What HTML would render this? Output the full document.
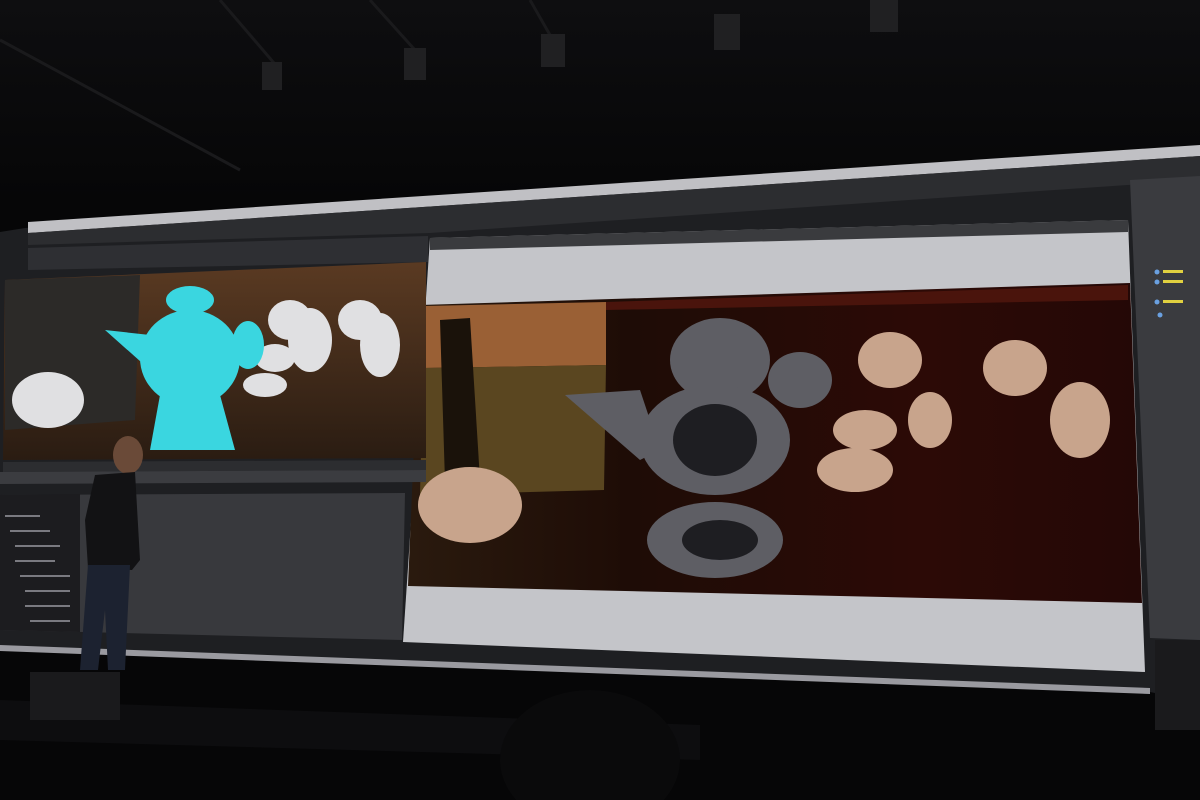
<!DOCTYPE html>
<html><head><meta charset="utf-8"><style>
html,body{margin:0;padding:0;background:#050506;width:1200px;height:800px;overflow:hidden;font-family:"Liberation Sans",sans-serif}
svg{display:block}
</style></head><body>
<svg width="1200" height="800" viewBox="0 0 1200 800" xmlns="http://www.w3.org/2000/svg">
<defs>
<linearGradient id="rend" x1="0" y1="0" x2="1" y2="0"><stop offset="0" stop-color="#2a1a0e"/><stop offset="0.3" stop-color="#1e0c06"/><stop offset="0.7" stop-color="#2c0a06"/><stop offset="1" stop-color="#240806"/></linearGradient>
<linearGradient id="vp" x1="0" y1="0" x2="0" y2="1"><stop offset="0" stop-color="#5a3a22"/><stop offset="1" stop-color="#2a1c12"/></linearGradient>
<linearGradient id="ceil" x1="0" y1="0" x2="0" y2="1"><stop offset="0" stop-color="#0e0e10"/><stop offset="1" stop-color="#060607"/></linearGradient>
</defs>
<rect width="1200" height="800" fill="#060607"/>
<rect x="0" y="0" width="1200" height="200" fill="url(#ceil)"/>
<g stroke="#1a1a1c" stroke-width="3"><line x1="0" y1="40" x2="240" y2="170"/><line x1="220" y1="0" x2="280" y2="70"/><line x1="370" y1="0" x2="415" y2="50"/><line x1="530" y1="0" x2="550" y2="35"/></g>
<g fill="#202022"><rect x="262" y="62" width="20" height="28"/><rect x="404" y="48" width="22" height="32"/><rect x="541" y="34" width="24" height="33"/><rect x="714" y="14" width="26" height="36"/><rect x="870" y="0" width="28" height="32"/></g>
<!-- screen -->
<polygon points="25,228 1200,146 1200,702 1150,692 0,648 0,232" fill="#1e1f22"/>
<polygon points="28,222 1200,145 1200,156 28,233" fill="#c0c0c4"/>
<text x="700" y="195" font-size="6" fill="#cfcfd2" transform="rotate(-3.8 700 195)">** Katana 1.0v1b7 - GTC_DualKatana **</text>
<polygon points="28,233 1200,156 1200,180 430,233 28,245" fill="#2c2d30"/>
<!-- right sidebar -->
<polygon points="1130,180 1200,176 1200,640 1150,638" fill="#3a3b3f"/>
<g fill="#e0d040"><rect x="1163" y="270" width="20" height="3"/><rect x="1163" y="280" width="20" height="3"/><rect x="1163" y="300" width="20" height="3"/></g>
<g fill="#6aa0e0"><circle cx="1157" cy="272" r="2.5"/><circle cx="1157" cy="282" r="2.5"/><circle cx="1157" cy="302" r="2.5"/><circle cx="1160" cy="315" r="2.5"/></g>
<!-- gray render panel -->
<polygon points="430,238 1128,220 1145,672 403,642" fill="#c4c5c9"/>
<polygon points="430,238 1128,220 1128,232 430,250" fill="#3a3b3e"/>
<!-- render image -->
<polygon points="420,305 1130,283 1142,603 408,586" fill="url(#rend)"/>
<polygon points="425,306 606,302 606,365 423,368" fill="#9a6035"/>
<polygon points="423,368 606,365 604,490 420,495" fill="#5a4620"/>
<polygon points="440,320 470,318 480,480 445,482" fill="#1a120a"/>
<polygon points="606,302 1128,285 1128,300 606,310" fill="#4a140c"/>
<g fill="#c8a48c">
<ellipse cx="890" cy="360" rx="32" ry="28"/><ellipse cx="1015" cy="368" rx="32" ry="28"/><ellipse cx="470" cy="505" rx="52" ry="38"/><ellipse cx="865" cy="430" rx="32" ry="20"/><ellipse cx="855" cy="470" rx="38" ry="22"/><ellipse cx="1080" cy="420" rx="30" ry="38"/><ellipse cx="930" cy="420" rx="22" ry="28"/>
</g>
<g fill="#5e5e64"><ellipse cx="720" cy="360" rx="50" ry="42"/><ellipse cx="715" cy="440" rx="75" ry="55"/><ellipse cx="715" cy="540" rx="68" ry="38"/><ellipse cx="800" cy="380" rx="32" ry="28"/><polygon points="565,395 640,390 660,450 640,460"/></g>
<g fill="#1e1e22"><ellipse cx="715" cy="440" rx="42" ry="36"/><ellipse cx="720" cy="540" rx="38" ry="20"/></g>
<!-- left viewport -->
<polygon points="28,248 428,236 428,262 28,270" fill="#2e2f33"/>
<polygon points="5,280 426,262 426,458 3,460" fill="url(#vp)"/>
<polygon points="5,280 140,275 135,420 5,430" fill="#2c2a28"/>
<g fill="#e0e0e2"><ellipse cx="48" cy="400" rx="36" ry="28"/><ellipse cx="290" cy="320" rx="22" ry="20"/><ellipse cx="360" cy="320" rx="22" ry="20"/><ellipse cx="275" cy="358" rx="20" ry="14"/><ellipse cx="265" cy="385" rx="22" ry="12"/><ellipse cx="380" cy="345" rx="20" ry="32"/><ellipse cx="310" cy="340" rx="22" ry="32"/></g>
<g fill="#3ad6e0"><ellipse cx="190" cy="358" rx="50" ry="48"/><ellipse cx="190" cy="300" rx="24" ry="14"/><polygon points="160,395 220,395 235,450 150,450"/><polygon points="105,330 150,335 150,370"/><ellipse cx="248" cy="345" rx="16" ry="24"/></g>
<polygon points="3,462 426,460 426,470 3,472" fill="#2c2d30"/>
<!-- lower left panel -->
<polygon points="0,472 426,470 426,482 0,484" fill="#3b3c40"/>
<polygon points="0,495 405,493 402,640 0,630" fill="#38393d"/>
<polygon points="0,495 80,494 80,632 0,630" fill="#1c1c1f"/>
<g fill="#7a7a80"><rect x="5" y="515" width="35" height="2"/><rect x="10" y="530" width="40" height="2"/><rect x="15" y="545" width="45" height="2"/><rect x="15" y="560" width="40" height="2"/><rect x="20" y="575" width="50" height="2"/><rect x="25" y="590" width="45" height="2"/><rect x="25" y="605" width="45" height="2"/><rect x="30" y="620" width="40" height="2"/></g>
<!-- screen bottom edge -->
<polygon points="0,645 1150,688 1150,694 0,651" fill="#9a9aa0"/>
<!-- stage -->
<polygon points="0,700 700,725 700,760 0,740" fill="#0d0d0f"/>
<rect x="30" y="672" width="90" height="48" fill="#1a1a1c"/>
<ellipse cx="590" cy="760" rx="90" ry="70" fill="#0a0a0b"/>
<rect x="1155" y="640" width="45" height="90" fill="#1a1a1c"/>
<!-- presenter -->
<ellipse cx="128" cy="455" rx="15" ry="19" fill="#6a4a38"/>
<path d="M95 475 L135 472 L140 560 L132 570 L88 568 L85 520 Z" fill="#121214"/>
<path d="M88 565 L130 565 L125 670 L108 670 L105 610 L98 670 L80 670 Z" fill="#1c2230"/>
</svg>
</body></html>
